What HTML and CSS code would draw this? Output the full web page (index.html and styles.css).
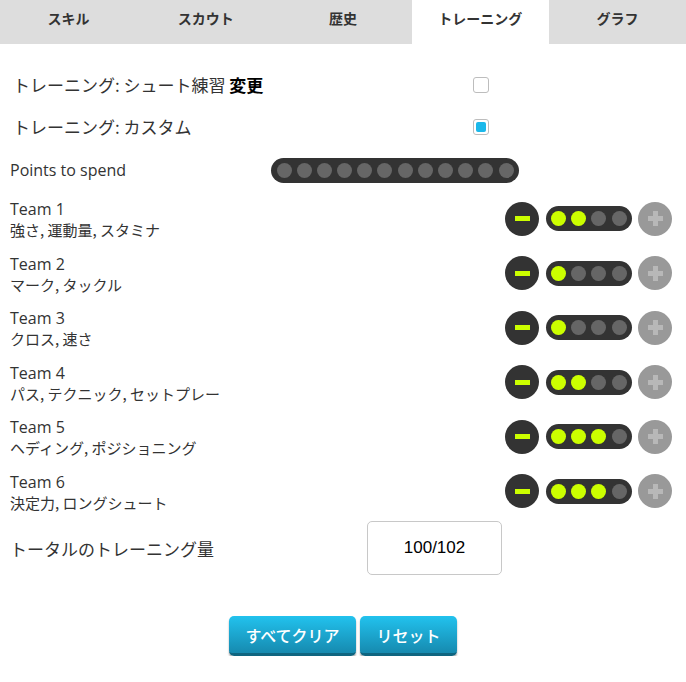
FILE: index.html
```html
<!DOCTYPE html>
<html lang="ja">
<head>
<meta charset="utf-8">
<title>トレーニング</title>
<link rel="stylesheet" href="styles.css">
</head>
<body>
<nav class="tabs">
  <div class="tab">スキル</div>
  <div class="tab">スカウト</div>
  <div class="tab">歴史</div>
  <div class="tab active">トレーニング</div>
  <div class="tab">グラフ</div>
</nav>
<main class="content">
  <div class="opt-row">
    <div class="opt-label">トレーニング: シュート練習 <b>変更</b></div>
    <span class="check"></span>
  </div>
  <div class="opt-row">
    <div class="opt-label">トレーニング: カスタム</div>
    <span class="check checked"></span>
  </div>
  <div class="points-row">
    <div class="points-label">Points to spend</div>
    <div class="dots-bar">
      <i class="dot"></i><i class="dot"></i><i class="dot"></i><i class="dot"></i><i class="dot"></i><i class="dot"></i><i class="dot"></i><i class="dot"></i><i class="dot"></i><i class="dot"></i><i class="dot"></i><i class="dot"></i>
    </div>
  </div>

  <div class="team-row">
    <div class="team-info"><div class="team-name">Team 1</div><div class="team-skills">強さ, 運動量, スタミナ</div></div>
    <div class="controls">
      <span class="btn-minus"><i></i></span>
      <div class="dots-bar small"><i class="dot on"></i><i class="dot on"></i><i class="dot"></i><i class="dot"></i></div>
      <span class="btn-plus"><i class="h"></i><i class="v"></i></span>
    </div>
  </div>
  <div class="team-row">
    <div class="team-info"><div class="team-name">Team 2</div><div class="team-skills">マーク, タックル</div></div>
    <div class="controls">
      <span class="btn-minus"><i></i></span>
      <div class="dots-bar small"><i class="dot on"></i><i class="dot"></i><i class="dot"></i><i class="dot"></i></div>
      <span class="btn-plus"><i class="h"></i><i class="v"></i></span>
    </div>
  </div>
  <div class="team-row">
    <div class="team-info"><div class="team-name">Team 3</div><div class="team-skills">クロス, 速さ</div></div>
    <div class="controls">
      <span class="btn-minus"><i></i></span>
      <div class="dots-bar small"><i class="dot on"></i><i class="dot"></i><i class="dot"></i><i class="dot"></i></div>
      <span class="btn-plus"><i class="h"></i><i class="v"></i></span>
    </div>
  </div>
  <div class="team-row">
    <div class="team-info"><div class="team-name">Team 4</div><div class="team-skills">パス, テクニック, セットプレー</div></div>
    <div class="controls">
      <span class="btn-minus"><i></i></span>
      <div class="dots-bar small"><i class="dot on"></i><i class="dot on"></i><i class="dot"></i><i class="dot"></i></div>
      <span class="btn-plus"><i class="h"></i><i class="v"></i></span>
    </div>
  </div>
  <div class="team-row">
    <div class="team-info"><div class="team-name">Team 5</div><div class="team-skills">ヘディング, ポジショニング</div></div>
    <div class="controls">
      <span class="btn-minus"><i></i></span>
      <div class="dots-bar small"><i class="dot on"></i><i class="dot on"></i><i class="dot on"></i><i class="dot"></i></div>
      <span class="btn-plus"><i class="h"></i><i class="v"></i></span>
    </div>
  </div>
  <div class="team-row">
    <div class="team-info"><div class="team-name">Team 6</div><div class="team-skills">決定力, ロングシュート</div></div>
    <div class="controls">
      <span class="btn-minus"><i></i></span>
      <div class="dots-bar small"><i class="dot on"></i><i class="dot on"></i><i class="dot on"></i><i class="dot"></i></div>
      <span class="btn-plus"><i class="h"></i><i class="v"></i></span>
    </div>
  </div>

  <div class="total-row">
    <div class="total-label">トータルのトレーニング量</div>
    <div class="total-box">100/102</div>
  </div>

  <div class="actions">
    <button class="action-btn wide">すべてクリア</button>
    <button class="action-btn">リセット</button>
  </div>
</main>
</body>
</html>
```

FILE: styles.css
```css
* { box-sizing: border-box; }
html, body { margin: 0; padding: 0; background: #fff; }
body {
  font-family: "Open Sans", "Noto Sans CJK JP", sans-serif;
  color: #333;
  font-size: 16px;
  width: 686px;
}
.tabs {
  display: flex;
  height: 44px;
  background: #dddddd;
}
.tab {
  flex: 1;
  text-align: center;
  font-family: "Noto Sans CJK JP", sans-serif;
  font-weight: 700;
  font-size: 14px;
  line-height: 20px;
  padding-top: 8px;
  color: #333;
}
.tab.active { background: #fff; }

.content { padding: 20px 14px 0 10px; }

.opt-row {
  display: flex;
  align-items: center;
  height: 42px;
  padding-left: 3px;
}
.opt-label {
  width: 460px;
  font-family: "Noto Sans CJK JP", sans-serif;
  font-size: 17px;
  line-height: 24px;
}
.opt-label b { color: #000; font-weight: 700; }
.check {
  width: 16px;
  height: 16px;
  border: 1px solid #bdbdbd;
  border-radius: 3px;
  background: #fff;
  padding: 2px;
}
.check.checked::after {
  content: "";
  display: block;
  width: 100%;
  height: 100%;
  border-radius: 2px;
  background: #1bb8ea;
}

.points-row {
  display: flex;
  align-items: center;
  height: 44px;
}
.points-label { width: 261px; line-height: 22px; }

.dots-bar {
  display: flex;
  gap: 5.2px;
  align-items: center;
  height: 25px;
  padding: 0 5px 0 5.5px;
  background: #333;
  border-radius: 13px;
}
.dot {
  width: 15px;
  height: 15px;
  border-radius: 50%;
  background: #666;
}
.dot.on { background: #ccff00; }
.dots-bar.small { width: 86px; gap: 5.3px; }

.team-row {
  display: flex;
  align-items: center;
  justify-content: space-between;
  height: 54.5px;
  padding-top: 1px;
}
.team-name { font-size: 16px; line-height: 20px; }
.team-skills {
  font-family: "Noto Sans CJK JP", sans-serif;
  font-size: 15px;
  line-height: 21px;
}
.controls {
  display: flex;
  align-items: center;
  gap: 6.5px;
  margin-top: -2px;
}
.btn-minus, .btn-plus {
  position: relative;
  width: 34px;
  height: 34px;
  border-radius: 50%;
  display: flex;
  align-items: center;
  justify-content: center;
}
.btn-minus { background: #333; }
.btn-minus i {
  width: 15px;
  height: 5px;
  background: #ccff00;
}
.btn-plus { background: #999; }
.btn-plus i { position: absolute; background: #b8b8b8; }
.btn-plus .h { width: 15px; height: 5px; }
.btn-plus .v { width: 5px; height: 15px; }

.total-row {
  display: flex;
  align-items: center;
  height: 54px;
  margin-top: 2px;
}
.total-label {
  width: 357px;
  font-family: "Noto Sans CJK JP", sans-serif;
  font-size: 17px;
}
.total-box {
  width: 135px;
  height: 54px;
  border: 1px solid #c8c8c8;
  border-radius: 5px;
  display: flex;
  align-items: center;
  justify-content: center;
  font-family: "Liberation Sans", sans-serif;
  font-size: 17px;
  color: #000;
}

.actions {
  display: flex;
  justify-content: center;
  gap: 4px;
  margin-top: 41px;
  padding-left: 4px;
}
.action-btn {
  height: 40px;
  border: 0;
  border-bottom: 3px solid #0f6580;
  border-radius: 5px;
  background: linear-gradient(#22c2ee, #168aaf);
  color: #fff;
  font-family: "Noto Sans CJK JP", sans-serif;
  font-size: 16px;
  font-weight: 500;
  padding: 0;
  width: 97px;
  box-shadow: 0 2px 2px rgba(0,0,0,0.35);
}
.action-btn.wide { width: 127px; }
```
